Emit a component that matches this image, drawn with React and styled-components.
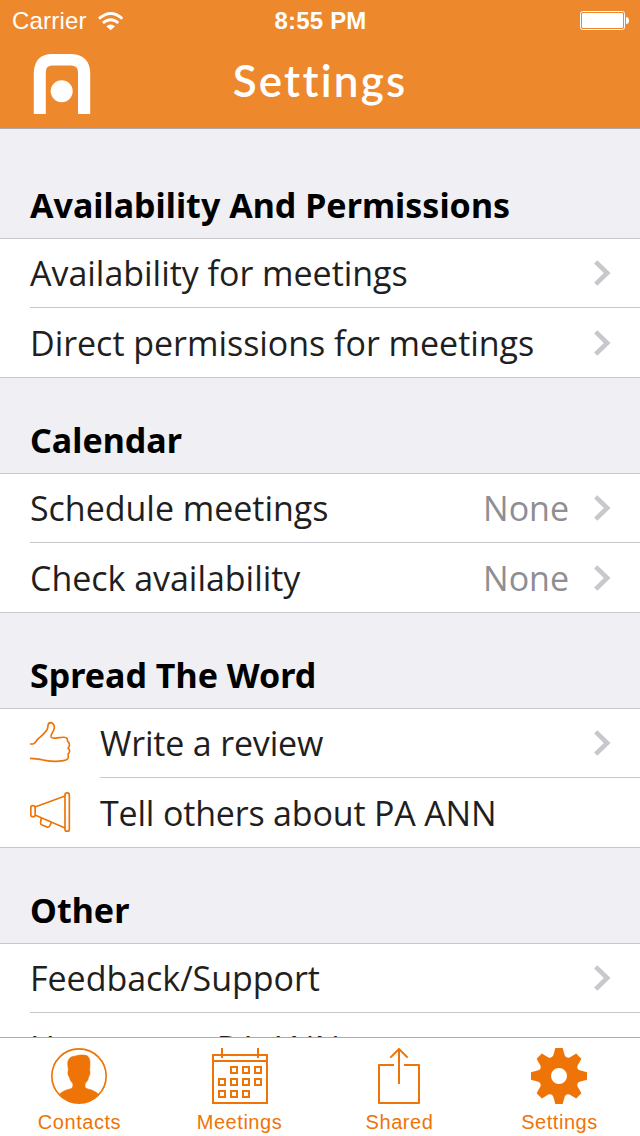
import React from 'react'
import styled, { createGlobalStyle } from 'styled-components'

const orange = '#ee7407'

const GlobalStyle = createGlobalStyle`
    body {
        margin: 0;
        background: #efeff4;
    }
`

const Screen = styled.div`
    display: flex;
    flex-direction: column;
    width: 640px;
    height: 1136px;
    overflow: hidden;
    background: #efeff4;
    font-family: "Noto Sans", sans-serif;
`

const Header = styled.header`
    flex: none;
    height: 128px;
    background: #ee882c;
    border-bottom: 1px solid #a9a9ae;
    color: #fff;
`

const StatusBar = styled.div`
    display: grid;
    grid-template-columns: 1fr auto 1fr;
    align-items: center;
    height: 40px;
    padding: 0 11px 0 12px;
    box-sizing: border-box;
    font: 24px/38px "Liberation Sans", sans-serif;
`

const Carrier = styled.div`
    display: flex;
    align-items: center;
    gap: 11px;
    padding-top: 2px;
    letter-spacing: 0.2px;
`

const Clock = styled.div`
    padding-top: 2px;
    font-size: 24px;
    font-weight: bold;
    letter-spacing: 0.2px;
`

const BatteryIcon = styled.svg`
    justify-self: end;
`

const NavBar = styled.div`
    display: grid;
    grid-template-columns: 1fr auto 1fr;
    align-items: center;
    height: 88px;
    padding: 0 33px;
`

const Title = styled.h1`
    margin: 0;
    padding-bottom: 8px;
    font: 600 44px/80px "Lato", sans-serif;
    letter-spacing: 2.2px;
`

const Content = styled.main`
    flex: 1;
    min-height: 0;
    overflow: hidden;
`

const SectionTitle = styled.h2`
    display: flex;
    align-items: flex-end;
    height: ${props => props.$first ? 109 : 95}px;
    margin: 0;
    padding: 0 30px 9px;
    box-sizing: border-box;
    font-size: 34px;
    font-weight: 700;
    line-height: 48px;
    letter-spacing: 0.02px;
    color: #000;
`

const List = styled.div`
    background: #fff;
    border-top: 1px solid #c8c7cc;
    border-bottom: 1px solid #c8c7cc;
`

const Row = styled.div`
    display: flex;
    align-items: center;
    padding-left: 30px;
    letter-spacing: ${props => props.$tight ? '-0.18px' : '-0.03px'};
`

const RowIcon = styled.svg`
    flex: none;
    width: 40px;
    height: 40px;
    margin: 0 30px 3px 0;
    overflow: visible;
    fill: none;
    stroke: ${orange};
    stroke-width: 5;
    stroke-linejoin: round;
`

const RowBody = styled.div`
    flex: 1;
    display: flex;
    align-items: center;
    height: 69px;
    padding-right: 29px;
    box-sizing: border-box;
    border-bottom: ${props => props.$last ? 'none' : '1px solid #c8c7cc'};
    font-family: "Open Sans", sans-serif;
    font-size: 34px;
    line-height: 68px;
    color: #1f1f21;
`

const Label = styled.span`
    flex: 1;
    white-space: nowrap;
`

const Value = styled.span`
    margin-right: 25px;
    color: #8e8e93;
`

const TabBar = styled.nav`
    flex: none;
    display: grid;
    grid-template-columns: repeat(4, 160px);
    height: 98px;
    margin-left: -1px;
    padding-right: 1px;
    background: #fff;
    border-top: 1px solid #acacac;
`

const Tab = styled.div`
    display: flex;
    flex-direction: column;
    align-items: center;
    padding-top: 10px;
    font: 20px/24px "Liberation Sans", sans-serif;
    letter-spacing: 0.55px;
    color: ${orange};
`

const TabLabel = styled.span`
    padding-left: 1px;
`

const TabIcon = styled.svg`
    width: 56px;
    height: 56px;
    margin-bottom: 6px;
    overflow: visible;
    fill: none;
    stroke: ${orange};
    stroke-width: 6;
`

function Chevron() {
    return (
        <svg width="17" height="26" viewBox="0 0 17 26">
            <path d="M1.7 1.9 L13.2 13 L1.7 24.1" fill="none" stroke="#c7c7cc" strokeWidth="4.6" />
        </svg>
    )
}

function Logo() {
    return (
        <svg width="58" height="60" viewBox="0 0 58 60">
            <path d="M0.8 60 V18 Q2 0 19 0 H39 Q56 1 57.2 18 V60 H45 V18 Q45 11.5 38 11.5 H19 Q12.8 11.5 12.8 18 V60 Z" fill="#fff" />
            <circle cx="28.7" cy="37.2" r="11" fill="#fff" />
        </svg>
    )
}

function Wifi() {
    return (
        <svg width="25" height="19" viewBox="294 32 75 57">
            <g fill="none" stroke="#fff" strokeWidth="8.500">
                <path d="M297 52 Q332 21 367 52" />
                <path d="M309 65 Q332 45 355 65" />
            </g>
            <path d="M319 75 Q332 64 345 75 L332 87 Z" fill="#fff" />
        </svg>
    )
}

function Battery() {
    return (
        <BatteryIcon width="49" height="20" viewBox="0 0 49 20">
            <rect x="0.5" y="1.5" width="44" height="18" rx="2" fill="none" stroke="#fff" />
            <rect x="2" y="3" width="41" height="15" rx="1" fill="#fff" />
            <path d="M46 7 Q49 7 49 10.5 Q49 14 46 14 Z" fill="#fff" />
        </BatteryIcon>
    )
}

function ThumbIcon() {
    return (
        <RowIcon viewBox="90 66 120 120">
            <path d="M90 132 H98 C106 132 106 124 115 116 C126 106 140 96 143 84 C145 76 142 69 151 68 C160 68 164 77 163 84 C161 98 150 104 153 111 C156 117 168 114 178 113 C188 112 199 109 202 117 C203 121 200 123 205 126 C210 130 209 141 204 145 C211 149 210 158 204 162 C208 174 202 181 190 182 C176 185 150 184 135 181 C116 177 107 175 90 175" />
        </RowIcon>
    )
}

function MegaphoneIcon() {
    return (
        <RowIcon viewBox="90 273 120 120">
            <rect x="92.500" y="317" width="13" height="33" rx="6" />
            <rect x="195" y="278.500" width="13" height="115" rx="6" />
            <path d="M105 321 L195 288 M105 345 L195 384" />
            <path d="M124 354 L121.500 368 Q121 373 126 375 L141 381 Q147 383 149 378 L154 367" />
        </RowIcon>
    )
}

function ContactsIcon() {
    return (
        <TabIcon viewBox="153 54 168 168">
            <circle cx="237" cy="138" r="81.500" strokeWidth="5" />
            <path
                d="M203 102 C203 84 214 79 226 78 C234 74 250 74 258 76 C269 80 271 92 270 104 L269 121 C272 126 269 139 266 141 C264 151 261 155 256 160 C254 170 255 175 264 177 C278 180 286 184 296 193 A81.500 81.500 0 0 1 178 193 C188 184 196 180 210 177 C218 175 220 170 218 160 C213 155 210 151 208 141 C204 138 202 127 205 121 Z"
                fill={orange}
                stroke={orange}
                strokeWidth="1.500"
            />
        </TabIcon>
    )
}

const days = [
    [210, 108], [246, 108], [282, 108],
    [174, 144], [210, 144], [246, 144], [282, 144],
    [174, 180], [210, 180], [246, 180],
]

function CalendarIcon() {
    return (
        <TabIcon viewBox="153 54 168 168">
            <rect x="159" y="75" width="162" height="144" />
            <path d="M159 93 H321 M186 54 V84 M294 54 V84" />
            {days.map(([x, y]) => (
                <rect key={`${x}-${y}`} x={x + 3} y={y + 3} width="18" height="18" />
            ))}
        </TabIcon>
    )
}

function ShareIcon() {
    return (
        <TabIcon viewBox="153 54 168 168" strokeLinejoin="round">
            <path d="M222 105 H177 V219 H297 V105 H252" />
            <path d="M237 58 V162 M211 83 L237 57 L263 83" />
        </TabIcon>
    )
}

// one tooth and the valley after it, turned 8 times round the centre
function gearPath() {
    const tooth = [[-17, 62], [-11, 84], [11, 84], [17, 62]]
    let d = ''
    for (let i = 0; i < 8; i++) {
        const a = (i * Math.PI) / 4
        const turn = ([x, r]) => {
            const px = x * Math.cos(a) + r * Math.sin(a)
            const py = x * Math.sin(a) - r * Math.cos(a)
            return `${px.toFixed(2)} ${py.toFixed(2)}`
        }
        const pts = tooth.map(turn)
        d += `${i === 0 ? 'M' : ''}${pts[0]} L${pts[1]} L${pts[2]} L${pts[3]} Q${turn([21.500, 52])} `
    }
    // the last curve closes on the first point
    return `${d}-17 -62 Z M24 0 A24 24 0 1 0 -24 0 A24 24 0 1 0 24 0 Z`
}

function GearIcon() {
    return (
        <TabIcon viewBox="-84 -84 168 168">
            <path d={gearPath()} fill={orange} fillRule="evenodd" stroke="none" />
        </TabIcon>
    )
}

const sections = [
    {
        title: 'Availability And Permissions',
        rows: [
            { label: 'Availability for meetings', link: true },
            { label: 'Direct permissions for meetings', link: true },
        ],
    },
    {
        title: 'Calendar',
        rows: [
            { label: 'Schedule meetings', value: 'None', link: true },
            { label: 'Check availability', value: 'None', link: true },
        ],
    },
    {
        title: 'Spread The Word',
        rows: [
            { label: 'Write a review', icon: ThumbIcon, link: true },
            { label: 'Tell others about PA ANN', icon: MegaphoneIcon },
        ],
    },
    {
        title: 'Other',
        rows: [
            { label: 'Feedback/Support', link: true },
            { label: 'How to use PA ANN' },
        ],
    },
]

const tabs = [
    { label: 'Contacts', icon: ContactsIcon },
    { label: 'Meetings', icon: CalendarIcon },
    { label: 'Shared', icon: ShareIcon },
    { label: 'Settings', icon: GearIcon },
]

export default function App() {
    function renderRow(row, index, rows) {
        const Icon = row.icon
        return (
            <Row key={row.label} $tight={!!Icon}>
                {Icon && <Icon />}
                <RowBody $last={index === rows.length - 1}>
                    <Label>{row.label}</Label>
                    {row.value && <Value>{row.value}</Value>}
                    {row.link && <Chevron />}
                </RowBody>
            </Row>
        )
    }

    return (
        <Screen>
            <GlobalStyle />
            <Header>
                <StatusBar>
                    <Carrier>Carrier <Wifi /></Carrier>
                    <Clock>8:55 PM</Clock>
                    <Battery />
                </StatusBar>
                <NavBar>
                    <Logo />
                    <Title>Settings</Title>
                </NavBar>
            </Header>
            <Content>
                {sections.map((section, index) => (
                    <section key={section.title}>
                        <SectionTitle $first={index === 0}>{section.title}</SectionTitle>
                        <List>{section.rows.map(renderRow)}</List>
                    </section>
                ))}
            </Content>
            <TabBar>
                {tabs.map(tab => (
                    <Tab key={tab.label}>
                        <tab.icon />
                        <TabLabel>{tab.label}</TabLabel>
                    </Tab>
                ))}
            </TabBar>
        </Screen>
    )
}
